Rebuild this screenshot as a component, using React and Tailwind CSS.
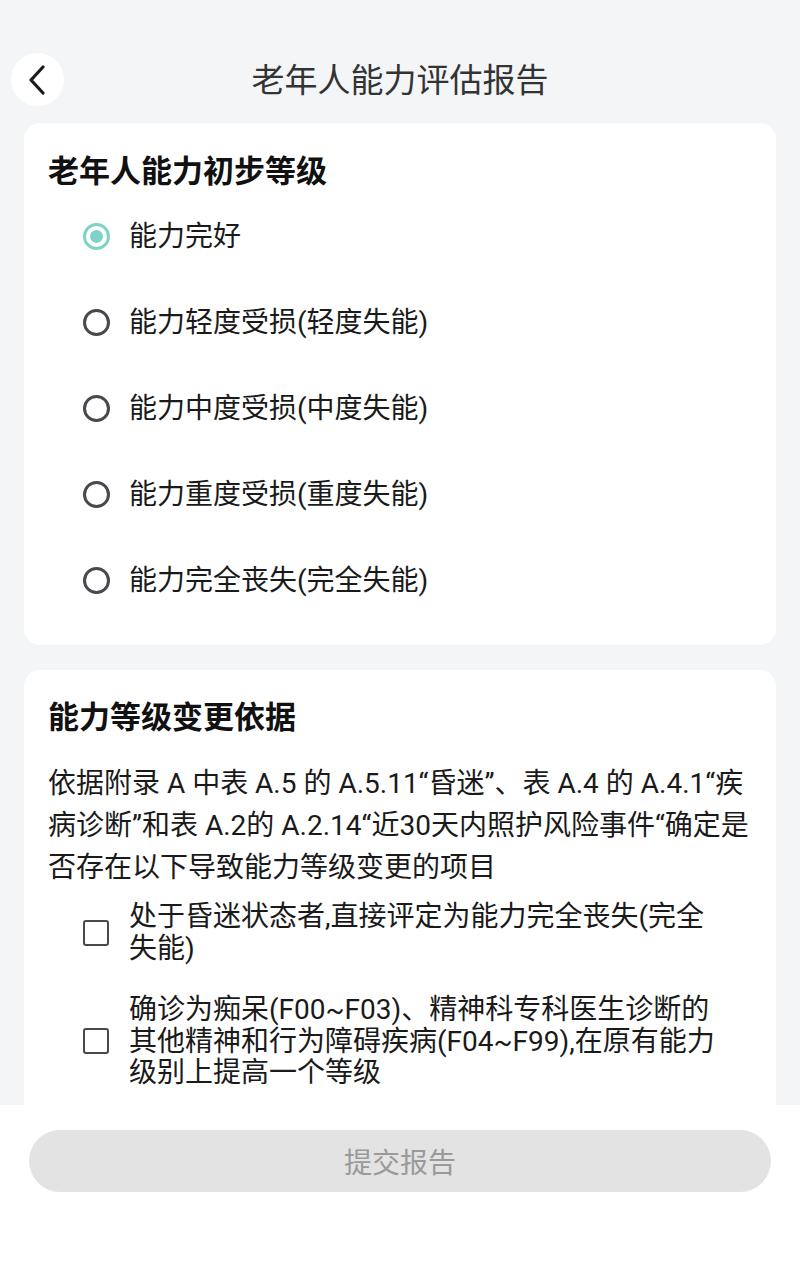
import React, { useState } from 'react';

const LEVELS = [
  '能力完好',
  '能力轻度受损(轻度失能)',
  '能力中度受损(中度失能)',
  '能力重度受损(重度失能)',
  '能力完全丧失(完全失能)',
];

const REASONS = [
  '处于昏迷状态者,直接评定为能力完全丧失(完全失能)',
  '确诊为痴呆(F00~F03)、精神科专科医生诊断的其他精神和行为障碍疾病(F04~F99),在原有能力级别上提高一个等级',
];

const font = { fontFamily: 'Roboto, "Noto Sans CJK SC", sans-serif' };

const App = () => {
  const [level, setLevel] = useState(0);
  const [checked, setChecked] = useState([]);

  const toggle = (i) => {
    setChecked(checked.includes(i) ? checked.filter(x => x !== i) : [...checked, i]);
  };

  return (
    <div className="w-[800px] h-[1280px] flex flex-col bg-[#f4f5f7] overflow-hidden" style={font}>
      <div className="flex-1 overflow-hidden flex flex-col">
        {/* header */}
        <div className="relative h-[52px] mt-[53px] flex items-center justify-center shrink-0">
          <button className="absolute left-[11px] top-0 w-[53px] h-[53px] rounded-full bg-white flex items-center justify-center">
            <svg width="18" height="30" viewBox="0 0 18 30" fill="none" className="-ml-[2px]">
              <path d="M15 2 L3 15 L15 28" stroke="#1a1a1a" strokeWidth="3.2" strokeLinecap="round" strokeLinejoin="round" />
            </svg>
          </button>
          <span className="mt-[3px] text-[33px] leading-[40px] text-[#333333]">老年人能力评估报告</span>
        </div>

        {/* card 1 */}
        <div className="mx-6 mt-[18px] bg-white rounded-2xl px-6 pt-[29px] pb-[22px] shrink-0">
          <div className="text-[31px] leading-[40px] font-bold text-[#111111]">老年人能力初步等级</div>
          <div className="mt-[1px]">
            {LEVELS.map((t, i) => (
              <div key={i} onClick={() => setLevel(i)} className="h-[86px] flex items-center cursor-pointer">
                <div className={`ml-[35px] w-[27px] h-[27px] rounded-full border-[3px] flex items-center justify-center ${level === i ? 'border-[#7dd3c8]' : 'border-[#48484e]'}`}>
                  {level === i && <div className="w-[13px] h-[13px] rounded-full bg-[#7dd3c8]"></div>}
                </div>
                <span className="ml-[19px] mt-[2px] text-[28px] leading-[36px] text-[#1a1a1a]">{t}</span>
              </div>
            ))}
          </div>
        </div>

        {/* card 2 */}
        <div className="mx-6 mt-[25px] bg-white rounded-t-2xl px-6 pt-[28px] pb-6 shrink-0">
          <div className="text-[31px] leading-[40px] font-bold text-[#111111]">能力等级变更依据</div>
          <p className="mt-[25px] text-[28px] leading-[42px] text-[#1a1a1a]">
            依据附录 A 中表 A.5 的 A.5.11“昏迷”、表 A.4 的 A.4.1“疾病诊断”和表 A.2的 A.2.14“近30天内照护风险事件“确定是否存在以下导致能力等级变更的项目
          </p>
          <div className="mt-[12px] flex flex-col gap-[30px]">
            {REASONS.map((t, i) => (
              <div key={i} onClick={() => toggle(i)} className="flex items-center cursor-pointer">
                <div className={`ml-[35px] shrink-0 w-[26px] h-[26px] rounded-[3px] border-[2.5px] flex items-center justify-center ${checked.includes(i) ? 'border-[#7dd3c8] bg-[#7dd3c8]' : 'border-[#48484e]'}`}>
                  {checked.includes(i) && (
                    <svg width="16" height="16" viewBox="0 0 16 16" fill="none">
                      <path d="M3 8 L7 12 L13 4" stroke="white" strokeWidth="2.5" strokeLinecap="round" strokeLinejoin="round" />
                    </svg>
                  )}
                </div>
                <span className="ml-[20px] w-[592px] text-[28px] leading-[31.5px] text-[#1a1a1a]">{t}</span>
              </div>
            ))}
          </div>
        </div>
      </div>

      {/* bottom bar */}
      <div className="h-[175px] shrink-0 bg-white px-[29px] pt-[25px]">
        <button className="w-full h-[62px] rounded-full bg-[#e3e3e3] text-[28px] leading-[62px] pt-[3px] text-[#9a9a9a]">提交报告</button>
      </div>
    </div>
  );
};

export default App;
